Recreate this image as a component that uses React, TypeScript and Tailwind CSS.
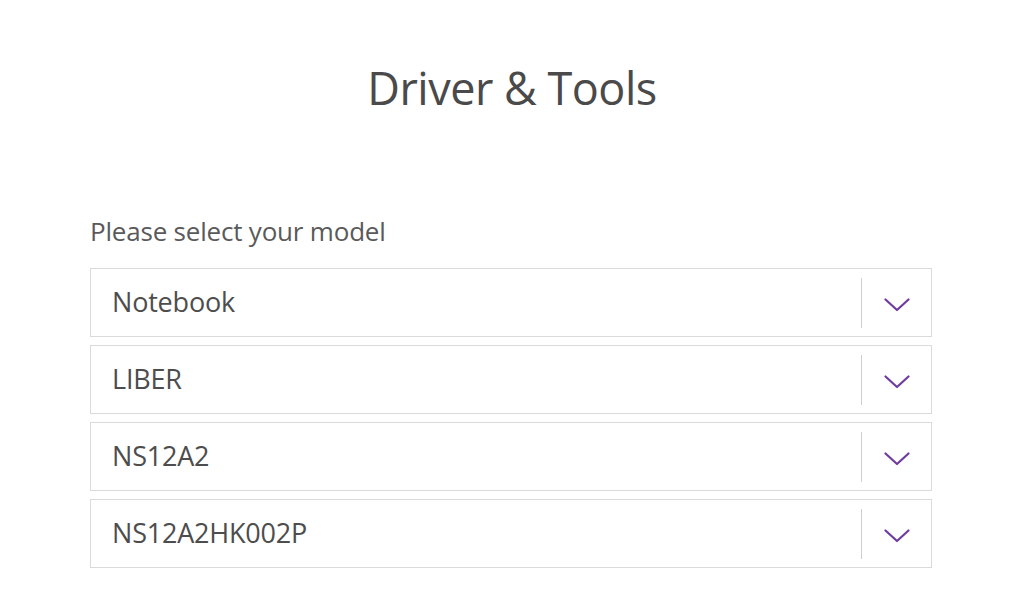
const options = ["Notebook", "LIBER", "NS12A2", "NS12A2HK002P"];

function Chevron() {
  return (
    <svg width="26" height="14" viewBox="0 0 26 14" fill="none">
      <path d="M1.5 1.5 L13 12 L24.5 1.5" stroke="#6f3b9f" strokeWidth="2.2" strokeLinecap="round" strokeLinejoin="round" />
    </svg>
  );
}

export default function App() {
  return (
    <div className="min-h-[615px] bg-white font-['Open_Sans','Noto_Sans',sans-serif] text-[#555]">
      <h1 className="pt-[58px] text-center text-[45px] leading-[60px] tracking-[-0.5px] text-[#4a4a4a]">
        Driver &amp; Tools
      </h1>

      <div className="ml-[90px] mr-[92px] mt-[96px]">
        <p className="text-[26px] leading-[34px] tracking-[-0.2px] text-[#5a5a5a]">Please select your model</p>

        <div className="mt-[20px] flex flex-col gap-[8px]">
          {options.map((option) => (
            <div
              key={option}
              className="flex h-[69px] items-center border border-[#dadada] bg-white"
            >
              <span className="flex-1 pl-[21px] text-[27px] tracking-[-0.2px] text-[#4d4d4d]">{option}</span>
              <div className="h-[50px] w-px bg-[#cfcfcf]" />
              <div className="flex w-[69px] items-center justify-center pt-[5px]">
                <Chevron />
              </div>
            </div>
          ))}
        </div>
      </div>
    </div>
  );
}
